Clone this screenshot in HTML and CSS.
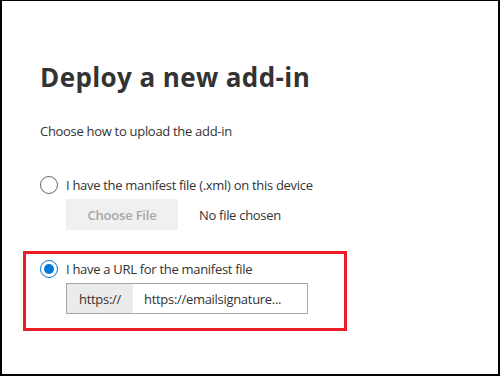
FILE: index.html
```html
<!DOCTYPE html>
<html lang="en">
<head>
  <meta charset="UTF-8" />
  <title>Deploy a new add-in</title>
  <link rel="stylesheet" href="styles.css">
</head>
<body>
  <div class="frame">
    <div class="panel">
      <h1 class="title">Deploy a new add-in</h1>
      <p class="lead">Choose how to upload the add-in</p>

      <div class="option">
        <label class="choice">
          <span class="radio"></span>
          <span>I have the manifest file (.xml) on this device</span>
        </label>
        <div class="file-row">
          <button class="file-button" disabled>Choose File</button>
          <span class="file-name">No file chosen</span>
        </div>
      </div>

      <div class="option highlight">
        <label class="choice">
          <span class="radio checked"></span>
          <span>I have a URL for the manifest file</span>
        </label>
        <div class="url-field">
          <span class="url-prefix">https://</span>
          <span class="url-value">https://emailsignature...</span>
        </div>
      </div>
    </div>
  </div>
</body>
</html>
```

FILE: styles.css
```css
html, body {
  margin: 0;
  padding: 0;
  background: #fff;
}

.frame {
  width: 500px;
  height: 376px;
  box-sizing: border-box;
  border: 2px solid #000;
  border-top-width: 1px;
  font-family: 'Open Sans', 'Noto Sans', sans-serif;
  color: #333;
  overflow: hidden;
}

.panel {
  padding: 0 0 0 21px;
}

.title {
  margin: 59px 0 0 17px;
  font-size: 26px;
  line-height: 34px;
  font-weight: 700;
  color: #333;
  letter-spacing: 0.4px;
}

.lead {
  margin: 28px 0 0 17px;
  font-size: 13px;
  line-height: 18px;
  letter-spacing: -0.3px;
}

.option {
  padding-left: 17px;
}

.choice {
  display: flex;
  align-items: center;
  gap: 8px;
  font-size: 13px;
  line-height: 18px;
  letter-spacing: -0.3px;
  margin-top: 36px;
}

.radio {
  width: 18px;
  height: 18px;
  box-sizing: border-box;
  border: 1px solid #666;
  border-radius: 50%;
  display: flex;
  align-items: center;
  justify-content: center;
}

.radio.checked {
  border-color: #0078d4;
}

.radio.checked::after {
  content: '';
  width: 10px;
  height: 10px;
  border-radius: 50%;
  background: #0078d4;
}

.file-row {
  display: flex;
  align-items: center;
  gap: 21px;
  margin: 5px 0 0 26px;
}

.file-button {
  width: 112px;
  height: 31px;
  border: none;
  background: #f0f0f0;
  color: #a6a6a6;
  font-family: inherit;
  font-size: 13px;
  font-weight: 600;
  letter-spacing: -0.2px;
}

.file-name {
  font-size: 13px;
  letter-spacing: -0.3px;
}

.highlight {
  width: 324px;
  box-sizing: border-box;
  margin-top: 21px;
  border: 3px solid #ed1c24;
  padding: 6px 0 14px 14px;
}

.highlight .choice {
  margin-top: 0;
}

.url-field {
  display: flex;
  width: 242px;
  height: 31px;
  box-sizing: border-box;
  margin: 5px 0 0 26px;
  border: 1px solid #a6a6a6;
  font-size: 13px;
  letter-spacing: -0.3px;
}

.url-prefix {
  width: 66px;
  background: #ebebeb;
  display: flex;
  align-items: center;
  justify-content: center;
}

.url-value {
  display: flex;
  align-items: center;
  padding-left: 11px;
}
```
